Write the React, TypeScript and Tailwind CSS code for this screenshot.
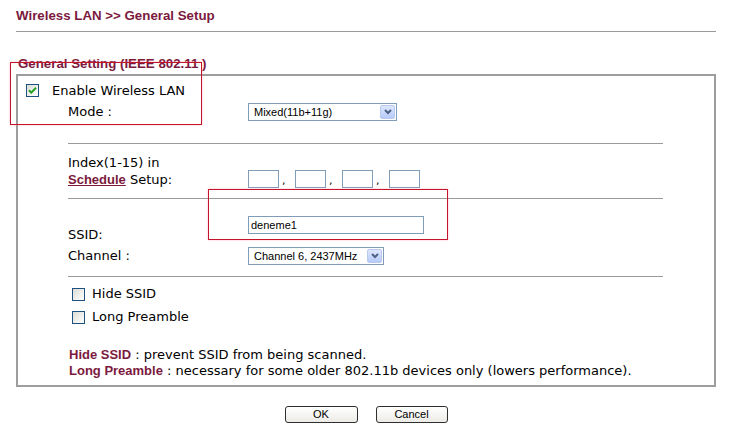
import React from 'react';

const maroon = 'text-[#7b1a3e]';

const Checkbox: React.FC<{ checked?: boolean }> = ({ checked }) => (
  <span className="inline-flex w-[13px] h-[13px] shrink-0 items-center justify-center border border-[#1c5180] bg-[linear-gradient(135deg,#dcdcd6,#ffffff)]">
    {checked && (
      <svg width="9" height="9" viewBox="0 0 9 9">
        <path d="M1 4.2 L3.3 6.6 L8 1.8" stroke="#21a121" strokeWidth="2" fill="none" />
      </svg>
    )}
  </span>
);

const Select: React.FC<{ value: string; width: string }> = ({ value, width }) => (
  <div className={`${width} h-[18px] flex items-center border border-[#7f9db9] bg-white`}>
    <span className="flex-1 pl-[5px] text-[11px] leading-[16px] text-black font-['Liberation_Sans',sans-serif]">
      {value}
    </span>
    <span className="w-[15px] h-[14px] mr-[1px] flex items-center justify-center rounded-[2px] border border-[#b9c9ef] bg-[linear-gradient(180deg,#dde7fe,#b7cbf9)]">
      <svg width="8" height="6" viewBox="0 0 8 6">
        <path d="M1 1 L4 4 L7 1" stroke="#4d6185" strokeWidth="2" fill="none" />
      </svg>
    </span>
  </div>
);

const TextBox: React.FC<{ width: string; value?: string }> = ({ width, value }) => (
  <div className={`${width} h-[18px] border border-[#7f9db9] bg-white pl-[2px] text-[11px] leading-[16px] text-black font-['Liberation_Sans',sans-serif]`}>
    {value}
  </div>
);

const Rule = () => <div className="ml-[50px] w-[595px] h-px bg-[#9a9a9a]" />;

export default function App() {
  return (
    <div className="relative w-[734px] h-[430px] overflow-hidden bg-white font-['DejaVu_Sans',sans-serif] text-[13px] text-black">
      {/* page heading */}
      <div className={`pt-[8px] pl-[16px] text-[13.3px] leading-[16px] font-bold font-['Liberation_Sans',sans-serif] ${maroon}`}>
        Wireless LAN &gt;&gt; General Setup
      </div>
      <div className="mt-[7px] ml-[16px] w-[700px] h-px bg-[#9a9a9a]" />

      <div className={`mt-[24px] pl-[18px] text-[13.3px] leading-[16px] font-bold font-['Liberation_Sans',sans-serif] ${maroon}`}>
        General Setting (IEEE 802.11 )
      </div>

      {/* settings panel */}
      <div className="mt-[2px] ml-[16px] w-[700px] border-2 border-[#9d9d9d] pb-[6px]">
        <div className="h-[27px] flex items-center gap-[13px] pl-[8px] pt-[1px]">
          <Checkbox checked />
          <span className="leading-[17px]">Enable Wireless LAN</span>
        </div>
        <div className="h-[18px] flex items-center">
          <span className="w-[230px] pl-[50px]">Mode :</span>
          <Select value="Mixed(11b+11g)" width="w-[149px]" />
        </div>

        <div className="mt-[22px]">
          <Rule />
        </div>

        <div className="flex pt-[10px]">
          <div className="w-[230px] pl-[50px] leading-[17px]">
            <div>Index(1-15) in</div>
            <div>
              <span className={`underline font-bold text-[13px] font-['Liberation_Sans',sans-serif] ${maroon}`}>Schedule</span>{' '}
              Setup:
            </div>
          </div>
          <div className="mt-[7px] flex items-end">
            <TextBox width="w-[31px]" />
            <span className="w-[16px] pl-[3px] text-[11px] leading-[14px]">,</span>
            <TextBox width="w-[31px]" />
            <span className="w-[16px] pl-[3px] text-[11px] leading-[14px]">,</span>
            <TextBox width="w-[31px]" />
            <span className="w-[16px] pl-[3px] text-[11px] leading-[14px]">,</span>
            <TextBox width="w-[31px]" />
          </div>
        </div>

        <div className="mt-[10px]">
          <Rule />
        </div>

        <div className="flex">
          <div className="w-[230px] pl-[50px] pt-[27px] leading-[17px]">SSID:</div>
          <div className="pt-[17px]">
            <TextBox width="w-[176px]" value="deneme1" />
          </div>
        </div>
        <div className="mt-[3px] h-[19px] flex items-center">
          <span className="w-[230px] pl-[50px]">Channel :</span>
          <Select value="Channel 6, 2437MHz" width="w-[136px]" />
        </div>

        <div className="mt-[11px]">
          <Rule />
        </div>

        <div className="mt-[8px] h-[18px] flex items-center gap-[7px] pl-[54px]">
          <Checkbox />
          <span>Hide SSID</span>
        </div>
        <div className="mt-[5px] h-[18px] flex items-center gap-[7px] pl-[54px]">
          <Checkbox />
          <span>Long Preamble</span>
        </div>

        <div className="mt-[21px] pl-[51px] leading-[16px]">
          <div>
            <span className={`font-bold text-[13px] font-['Liberation_Sans',sans-serif] ${maroon}`}>Hide SSID</span> : prevent SSID from being scanned.
          </div>
          <div>
            <span className={`font-bold text-[13px] font-['Liberation_Sans',sans-serif] ${maroon}`}>Long Preamble</span> : necessary for some older 802.11b devices only (lowers performance).
          </div>
        </div>
      </div>

      {/* buttons */}
      <div className="mt-[19px] w-[732px] flex justify-center gap-[18px] font-['Liberation_Sans',sans-serif] text-[11px]">
        <button className="w-[73px] h-[17px] leading-[15px] rounded-[3px] border border-[#2f2f2f] bg-[linear-gradient(180deg,#ffffff,#ecebe6)]">
          OK
        </button>
        <button className="w-[72px] h-[17px] leading-[15px] rounded-[3px] border border-[#2f2f2f] bg-[linear-gradient(180deg,#ffffff,#ecebe6)]">
          Cancel
        </button>
      </div>

      {/* red annotation frames */}
      <div className="absolute left-[10px] top-[62px] w-[192px] h-[63px] border border-[#c4142c] shadow-[0_0_2px_rgba(255,120,140,0.5)]" />
      <div className="absolute left-[208px] top-[189px] w-[240px] h-[51px] border border-[#c4142c] shadow-[0_0_2px_rgba(255,120,140,0.5)]" />
    </div>
  );
}
